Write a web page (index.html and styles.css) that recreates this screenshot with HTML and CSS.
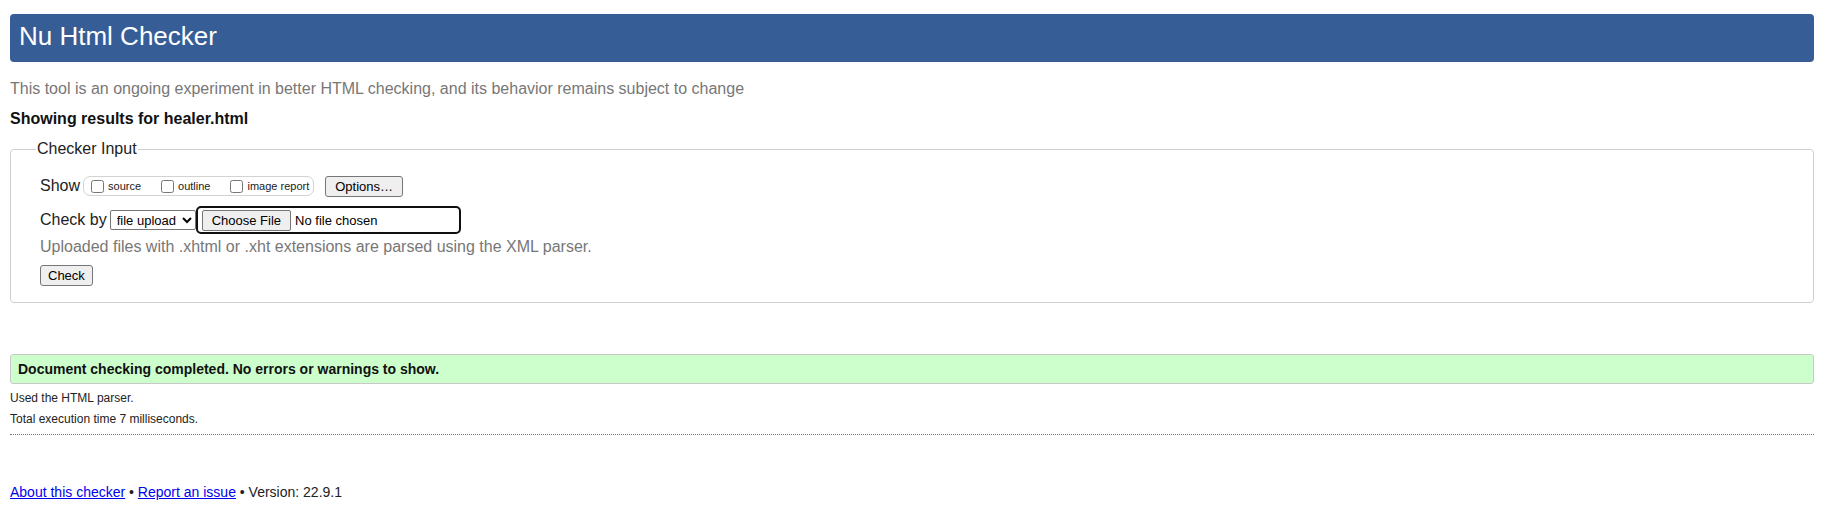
FILE: index.html
```html
<!DOCTYPE html>
<html lang="en">
<head>
<meta charset="utf-8">
<title>Nu Html Checker</title>
<link rel="stylesheet" href="styles.css">
</head>
<body>
<h1 class="title">Nu Html Checker</h1>
<p class="intro">This tool is an ongoing experiment in better HTML checking, and its behavior remains subject to change</p>
<p class="showing">Showing results for healer.html</p>
<form class="checker">
<fieldset class="input-box">
<legend class="legend">Checker Input</legend>
<div class="row row-show">
<span class="label">Show</span>
<span class="options-group">
<label class="opt"><input type="checkbox" class="cb">source</label>
<label class="opt"><input type="checkbox" class="cb">outline</label>
<label class="opt opt-last"><input type="checkbox" class="cb">image report</label>
</span>
<button type="button" class="btn btn-options">Options…</button>
</div>
<div class="row row-check">
<span class="label">Check by</span>
<select class="select"><option>file upload</option></select>
<span class="file">
<span class="file-btn">Choose File</span>
<span class="file-name">No file chosen</span>
</span>
</div>
<p class="hint">Uploaded files with .xhtml or .xht extensions are parsed using the XML parser.</p>
<div class="row row-submit"><button type="button" class="btn btn-check">Check</button></div>
</fieldset>
</form>
<p class="success">Document checking completed. No errors or warnings to show.</p>
<p class="meta">Used the HTML parser.</p>
<p class="meta">Total execution time 7 milliseconds.</p>
<hr class="sep">
<p class="footer"><a class="link" href="#">About this checker</a> • <a class="link" href="#">Report an issue</a> • Version: 22.9.1</p>
</body>
</html>
```
FILE: styles.css
```css
html, body {
  background: #fff;
}
body {
  margin: 0;
  padding: 14px 17px 0 10px;
  font-family: "Liberation Sans", Arial, sans-serif;
  color: #000;
}
.title {
  margin: 0;
  height: 48px;
  line-height: 45px;
  padding: 0 9px;
  font-size: 26px;
  font-weight: normal;
  background: #365d95;
  color: #fff;
  border-radius: 4px;
}
.intro {
  margin: 18px 0 0;
  font-size: 16px;
  line-height: 18px;
  color: #777;
}
.showing {
  margin: 12px 0 0;
  font-size: 16px;
  line-height: 18px;
  font-weight: bold;
  color: #111;
}
.checker {
  margin: 0;
}
.input-box {
  margin: 12px 0 0;
  min-width: 0;
  border: 1px solid #cfcfcf;
  border-radius: 4px;
  padding: 17px 0 16px 29px;
}
.legend {
  padding: 0 1px;
  margin-left: -4px;
  font-size: 16px;
  line-height: 18px;
  color: #222;
}
.row {
  display: flex;
  align-items: center;
}
.row-show {
  height: 22px;
}
.label {
  font-size: 16px;
  line-height: 18px;
  color: #222;
}
.options-group {
  display: inline-flex;
  align-items: center;
  box-sizing: border-box;
  height: 20px;
  margin-left: 3px;
  padding: 0 4px 0 7px;
  border: 1px solid #d3d3d3;
  border-radius: 7px;
}
.opt {
  display: inline-flex;
  align-items: center;
  font-size: 11px;
  line-height: 13px;
  margin-right: 20px;
  color: #222;
}
.opt-last {
  margin-right: 0;
}
.cb {
  margin: 0 4px 0 0;
  width: 13px;
  height: 13px;
}
.btn {
  box-sizing: border-box;
  height: 21px;
  font-family: "Liberation Sans", Arial, sans-serif;
  font-size: 13px;
  line-height: 15px;
  color: #000;
  background: #efefef;
  border: 1px solid #767676;
  border-radius: 3px;
}
.btn-options {
  margin-left: 11px;
  padding: 0 9px;
}
.row-check {
  margin-top: 9px;
  height: 28px;
}
.select {
  box-sizing: border-box;
  margin-left: 3px;
  width: 86px;
  height: 20px;
  font-family: "Liberation Sans", Arial, sans-serif;
  font-size: 13px;
  color: #000;
  background: #fff;
  border: 1px solid #767676;
  border-radius: 2px;
  padding: 0 0 0 2px;
}
.file {
  box-sizing: border-box;
  display: inline-flex;
  align-items: center;
  width: 265px;
  height: 28px;
  padding-left: 4px;
  border: 2px solid #101010;
  border-radius: 5px;
}
.file-btn {
  box-sizing: border-box;
  display: inline-flex;
  align-items: center;
  height: 21px;
  padding: 0 9px;
  font-size: 13px;
  background: #efefef;
  border: 1px solid #767676;
  border-radius: 2px;
}
.file-name {
  margin-left: 4px;
  font-size: 13px;
}
.hint {
  margin: 4px 0 0;
  font-size: 16px;
  line-height: 18px;
  color: #777;
}
.row-submit {
  margin-top: 9px;
}
.btn-check {
  padding: 0 7px;
}
.success {
  margin: 51px 0 0;
  padding: 6px 7px;
  font-size: 14px;
  line-height: 16px;
  font-weight: bold;
  background: #ccffcc;
  border: 1px solid #c8c8c8;
  border-radius: 3px;
  color: #111;
}
.meta {
  margin: 7px 0 0;
  font-size: 12px;
  line-height: 14px;
  color: #222;
}
.sep {
  margin: 8px 0 0;
  height: 0;
  border: 0;
  border-top: 1px dotted #777;
}
.footer {
  margin: 49px 0 0;
  font-size: 14px;
  line-height: 16px;
  color: #222;
}
.link {
  color: #0000ee;
}
```
